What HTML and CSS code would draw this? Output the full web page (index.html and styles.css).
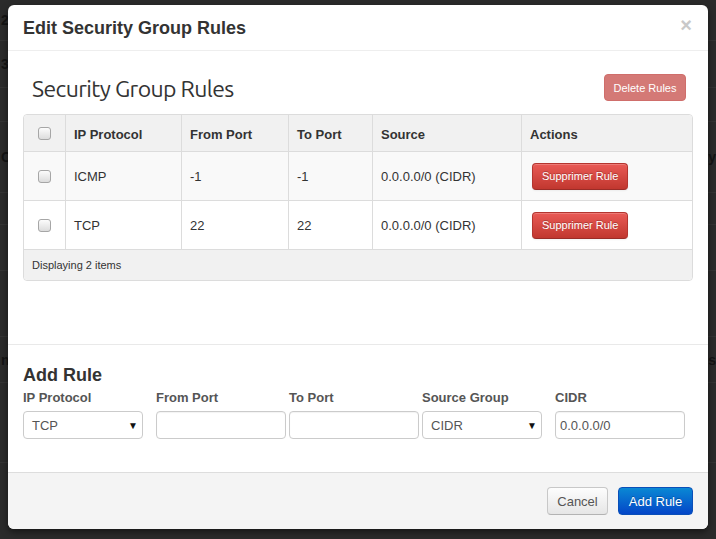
FILE: index.html
```html
<!DOCTYPE html>
<html>
<head>
<meta charset="utf-8">
<link rel="stylesheet" href="styles.css">
</head>
<body>
<div class="backdrop">
  <div class="bg-row r1"><span class="bg-l">29</span></div>
  <div class="bg-row r2"><span class="bg-l">30</span></div>
  <div class="bg-row r3"></div>
  <div class="bg-row r4"><span class="bg-l">OI</span><span class="bg-r">ty</span></div>
  <div class="bg-row r5"></div>
  <div class="bg-row r6"></div>
  <div class="bg-row r7"></div>
  <div class="bg-row r8"><span class="bg-l">n</span><span class="bg-r">s</span></div>
  <div class="bg-row r9"></div>
</div>

<div class="modal">
  <div class="modal-header">
    <h3 class="modal-title">Edit Security Group Rules</h3>
    <span class="close">×</span>
  </div>

  <div class="section rules">
    <div class="toolbar">
      <h2 class="table-title">Security Group Rules</h2>
      <button class="btn btn-danger-faded">Delete Rules</button>
    </div>
    <table class="table">
      <thead>
        <tr>
          <th class="c-check"><span class="cb"></span></th>
          <th class="c-proto">IP Protocol</th>
          <th class="c-from">From Port</th>
          <th class="c-to">To Port</th>
          <th class="c-src">Source</th>
          <th class="c-act">Actions</th>
        </tr>
      </thead>
      <tbody>
        <tr class="odd">
          <td class="c-check"><span class="cb"></span></td>
          <td>ICMP</td>
          <td>-1</td>
          <td>-1</td>
          <td>0.0.0.0/0 (CIDR)</td>
          <td class="act"><button class="btn btn-danger">Supprimer Rule</button></td>
        </tr>
        <tr class="even">
          <td class="c-check"><span class="cb"></span></td>
          <td>TCP</td>
          <td>22</td>
          <td>22</td>
          <td>0.0.0.0/0 (CIDR)</td>
          <td class="act"><button class="btn btn-danger">Supprimer Rule</button></td>
        </tr>
      </tbody>
      <tfoot>
        <tr>
          <td colspan="6" class="tfoot-cell">Displaying 2 items</td>
        </tr>
      </tfoot>
    </table>
  </div>

  <div class="section add">
    <h3 class="add-title">Add Rule</h3>
    <div class="fields">
      <div class="field">
        <label>IP Protocol</label>
        <div class="select w120"><span>TCP</span><span class="arrow">▼</span></div>
      </div>
      <div class="field">
        <label>From Port</label>
        <div class="input w130"></div>
      </div>
      <div class="field">
        <label>To Port</label>
        <div class="input w130"></div>
      </div>
      <div class="field">
        <label>Source Group</label>
        <div class="select w120"><span>CIDR</span><span class="arrow">▼</span></div>
      </div>
      <div class="field">
        <label>CIDR</label>
        <div class="input w130 filled">0.0.0.0/0</div>
      </div>
    </div>
  </div>

  <div class="modal-footer">
    <button class="btn btn-default">Cancel</button>
    <button class="btn btn-primary">Add Rule</button>
  </div>
</div>
</body>
</html>
```

FILE: styles.css
```css
* { box-sizing: border-box; }
html, body { margin: 0; padding: 0; }
body {
  width: 716px;
  height: 539px;
  overflow: hidden;
  background: #2b2b2b;
  font-family: "Liberation Sans", Arial, sans-serif;
  font-size: 13px;
  color: #333;
  position: relative;
}

/* dimmed page behind the modal */
.backdrop {
  display: flex;
  flex-direction: column;
}
.bg-row {
  display: flex;
  justify-content: space-between;
  align-items: center;
  border-bottom: 1px solid #343434;
  color: #141414;
  font-size: 14px;
  font-weight: bold;
  white-space: nowrap;
}
.bg-l { margin-left: 1px; }
.bg-r { margin-right: 0; }
.r1 { height: 41px; }
.r2 { height: 47px; }
.r3 { height: 34px; }
.r4 { height: 71px; }
.r5 { height: 32px; }
.r6 { height: 46px; }
.r7 { height: 66px; }
.r8 { height: 46px; }
.r9 { height: 80px; }

/* modal */
.modal {
  position: absolute;
  left: 8px;
  top: 5px;
  width: 700px;
  height: 524px;
  background: #fff;
  border-radius: 6px;
  box-shadow: 0 3px 7px rgba(0,0,0,0.5);
  display: flex;
  flex-direction: column;
  overflow: hidden;
}
.modal-header {
  height: 46px;
  padding: 0 15px;
  border-bottom: 1px solid #eee;
  display: flex;
  align-items: center;
  justify-content: space-between;
}
.modal-title {
  margin: 0;
  font-size: 18px;
  font-weight: bold;
  line-height: 20px;
  color: #333;
  padding-top: 1px;
}
.close {
  font-size: 20px;
  font-weight: bold;
  color: #c9c9c9;
  line-height: 20px;
  margin-right: 1px;
  margin-top: -5px;
}

.section { padding: 0 15px; }
.rules {
  padding-top: 23px;
  padding-bottom: 63px;
  border-bottom: 1px solid #e9e9e9;
}
.toolbar {
  display: flex;
  align-items: center;
  justify-content: space-between;
  height: 27px;
  margin-bottom: 13px;
  padding: 0 7px 0 9px;
}
.table-title {
  margin: 0;
  font-family: "Ubuntu", Roboto, "Open Sans", sans-serif;
  font-weight: normal;
  font-size: 23px;
  letter-spacing: -0.6px;
  color: #333;
  line-height: 27px;
  padding-top: 1px;
}

.btn {
  font-family: "Liberation Sans", Arial, sans-serif;
  border-radius: 4px;
  cursor: pointer;
  padding: 0 10px;
}
.btn-danger-faded {
  height: 27px;
  width: 82px;
  padding: 0;
  font-size: 11px;
  color: #fff;
  background: #d47976;
  border: 1px solid #cf6e6b;
}
.btn-danger {
  height: 27px;
  font-size: 11px;
  color: #fff;
  padding: 0 9px;
  background: linear-gradient(#e95a55, #c1372f);
  border: 1px solid #b4352f;
  border-bottom-color: #9a2c27;
  box-shadow: inset 0 1px 0 rgba(255,255,255,0.2), 0 1px 2px rgba(0,0,0,0.05);
  text-shadow: 0 -1px 0 rgba(0,0,0,0.25);
}

.table {
  width: 670px;
  border-collapse: separate;
  border-spacing: 0;
  border: 1px solid #dcdcdc;
  border-radius: 4px;
  table-layout: fixed;
}
.table th, .table td {
  text-align: left;
  padding: 0 8px;
  border-left: 1px solid #dcdcdc;
  vertical-align: middle;
}
.table th:first-child, .table td:first-child { border-left: none; }
.table thead th {
  height: 36px;
  padding-top: 2px;
  background: #f1f1f1;
  font-weight: bold;
}
.table thead th:first-child { border-top-left-radius: 4px; }
.table thead th:last-child { border-top-right-radius: 4px; }
.table tbody td {
  height: 49px;
  border-top: 1px solid #dcdcdc;
}
.table tr.odd td { background: #f9f9f9; }
.table tr.even td { background: #fff; }
.c-check { width: 41px; text-align: center !important; }
.c-proto { width: 116px; }
.c-from { width: 107px; }
.c-to { width: 84px; }
.c-src { width: 149px; }
.table td.c-check, .table th.c-check { padding: 0; }
.table td.act { padding-left: 10px; }
.tfoot-cell {
  height: 31px;
  border-top: 1px solid #dcdcdc;
  background: #f1f1f1;
  font-size: 11px;
  border-bottom-left-radius: 4px;
  border-bottom-right-radius: 4px;
}
.cb {
  display: inline-block;
  width: 13px;
  height: 13px;
  border: 1px solid #a6a6a6;
  border-radius: 3px;
  background: linear-gradient(#fcfcfc, #dcdcdc);
  vertical-align: middle;
  margin-top: -2px;
}

.add {
  padding-top: 20px;
  padding-bottom: 33px;
}
.add-title {
  margin: 0 0 4px;
  font-size: 18px;
  font-weight: bold;
  line-height: 20px;
  color: #333;
}
.fields {
  display: grid;
  grid-template-columns: repeat(5, 133px);
}
.field {
  display: flex;
  flex-direction: column;
}
.field label {
  font-weight: bold;
  font-size: 13px;
  color: #555;
  line-height: 18px;
  margin-bottom: 4px;
}
.input, .select {
  height: 28px;
  border: 1px solid #cbcbcb;
  border-radius: 4px;
  background: #fff;
  color: #555;
  font-size: 13px;
  display: flex;
  align-items: center;
  box-shadow: inset 0 1px 1px rgba(0,0,0,0.05);
}
.w120 { width: 120px; }
.w130 { width: 130px; }
.select {
  padding: 0 4px 0 8px;
  justify-content: space-between;
  box-shadow: none;
}
.arrow {
  font-size: 10px;
  color: #111;
}
.filled { padding-left: 4px; }

.modal-footer {
  flex: 1;
  border-top: 1px solid #ddd;
  background: #f4f4f4;
  display: flex;
  justify-content: flex-end;
  align-items: flex-start;
  gap: 10px;
  padding: 14px 15px 0;
}
.btn-default {
  height: 28px;
  width: 61px;
  padding: 0;
  font-size: 13px;
  color: #555;
  background: linear-gradient(#fdfdfd, #e6e6e6);
  border: 1px solid #c8c8c8;
  border-bottom-color: #b3b3b3;
}
.btn-primary {
  height: 28px;
  font-size: 13px;
  color: #fff;
  width: 75px;
  padding: 0;
  background: linear-gradient(#0a88d4, #0446c8);
  border: 1px solid #0a4fb8;
  text-shadow: 0 -1px 0 rgba(0,0,0,0.25);
}
```
